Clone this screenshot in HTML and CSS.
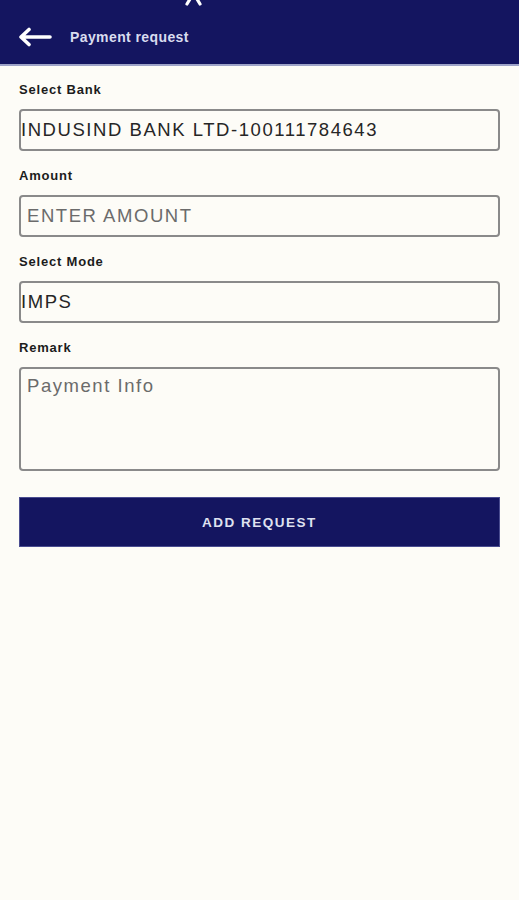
FILE: index.html
```html
<!DOCTYPE html>
<html lang="en">
<head>
  <meta charset="UTF-8" />
  <meta name="viewport" content="width=device-width, initial-scale=1.0" />
  <title>Payment request</title>
  <link rel="stylesheet" href="styles.css">
</head>
<body>
  <header class="topbar">
    <svg class="logo-tip" width="18" height="7" viewBox="0 0 18 7"><path d="M5 0 L2 5 M12 0 L15 5" fill="none" stroke="#fff" stroke-width="3.2" stroke-linecap="round"/></svg>
    <svg class="back" width="34" height="20" viewBox="0 0 34 20">
      <path d="M32 10 H4 M11 2.5 L3 10 L11 17.5" fill="none" stroke="#fff" stroke-width="3.6" stroke-linecap="round" stroke-linejoin="round"/>
    </svg>
    <span class="title">Payment request</span>
  </header>

  <main class="form">
    <label class="field-label">Select Bank</label>
    <div class="box value-flush">INDUSIND BANK LTD-100111784643</div>

    <label class="field-label">Amount</label>
    <div class="box placeholder">ENTER AMOUNT</div>

    <label class="field-label">Select Mode</label>
    <div class="box value-flush">IMPS</div>

    <label class="field-label">Remark</label>
    <div class="box area placeholder">Payment Info</div>

    <button class="submit">ADD REQUEST</button>
  </main>
</body>
</html>
```

FILE: styles.css
```css
body {
  margin: 0;
  background: #fdfcf7;
  font-family: "Liberation Sans", Arial, sans-serif;
  color: #222;
}
.topbar {
  position: relative;
  height: 66px;
  background: #141560;
  border-bottom: 2px solid #9ea3c8;
  display: flex;
  align-items: center;
  padding: 9px 0 0 18px;
  box-sizing: border-box;
}
.logo-tip {
  position: absolute;
  left: 185px;
  top: -1px;
}
.back {
  margin-right: 18px;
}
.title {
  color: #d9dcef;
  font-size: 14px;
  font-weight: 700;
  letter-spacing: 0.4px;
}
.form {
  padding: 16px 19px 0 19px;
  display: flex;
  flex-direction: column;
}
.field-label {
  font-size: 13px;
  font-weight: 700;
  letter-spacing: 0.8px;
  color: #1c1c1c;
  height: 17px;
  margin-bottom: 10px;
}
.box {
  height: 42px;
  box-sizing: border-box;
  border: 2px solid #8a8a8a;
  border-radius: 4px;
  font-size: 18.5px;
  letter-spacing: 1.55px;
  display: flex;
  align-items: center;
  padding: 0 6px;
  margin-bottom: 17px;
  color: #262626;
}
.value-flush {
  padding-left: 0;
}
.placeholder {
  color: #6b6b6b;
}
.area {
  height: 104px;
  align-items: flex-start;
  padding-top: 6px;
  margin-bottom: 26px;
}
.submit {
  height: 50px;
  background: #141560;
  border: 1px solid #4a4d90;
  color: #dfe1f0;
  font-family: "Liberation Sans", Arial, sans-serif;
  font-size: 13.5px;
  font-weight: 700;
  letter-spacing: 1.5px;
  padding: 0;
}
```
